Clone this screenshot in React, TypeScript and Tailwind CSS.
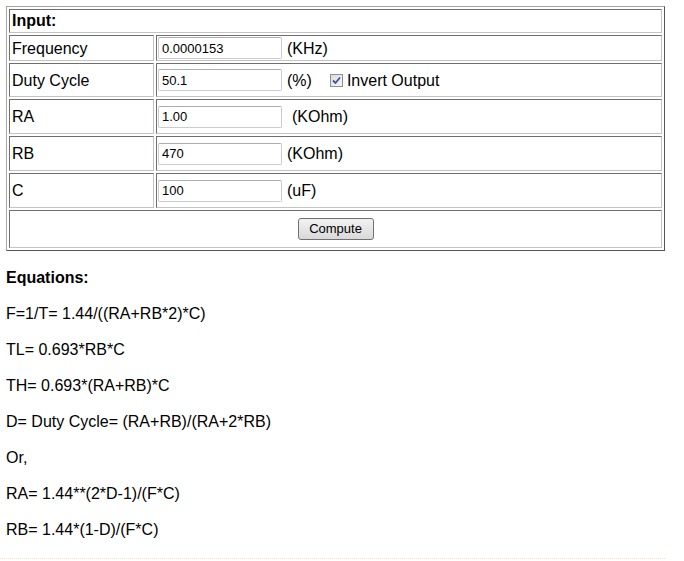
const cellBorder =
  'border border-t-[#6f6f6f] border-l-[#6f6f6f] border-r-[#c4c4c4] border-b-[#c4c4c4]';

function TextBox({ value }: { value: string }) {
  return (
    <div className="flex h-[22px] w-[124px] items-center rounded-[2px] border border-[#c9ccd1] border-t-[#abadb3] bg-white pl-[3px] pt-[1px] text-[13px] text-black">
      {value}
    </div>
  );
}

function CheckBox() {
  return (
    <span className="flex h-[13px] w-[13px] items-center justify-center border border-[#8f8f8f] bg-gradient-to-br from-[#dcdcdc] to-[#f6f6f6]">
      <svg width="9" height="9" viewBox="0 0 9 9">
        <path d="M1 4.5 L3.5 7 L8 1.5" fill="none" stroke="#3d5596" strokeWidth="1.8" />
      </svg>
    </span>
  );
}

function Row({
  label,
  value,
  unit,
  height,
  unitGap = 'ml-[5px]',
  extra,
}: {
  label: string;
  value: string;
  unit: string;
  height: string;
  unitGap?: string;
  extra?: React.ReactNode;
}) {
  return (
    <div className={`flex gap-[2px] ${height}`}>
      <div className={`${cellBorder} flex w-[145px] items-center pl-[2px] pt-[1px]`}>{label}</div>
      <div className={`${cellBorder} flex flex-1 items-center pl-[1px]`}>
        <TextBox value={value} />
        <span className={`${unitGap} pt-[1px]`}>{unit}</span>
        {extra}
      </div>
    </div>
  );
}

export default function App() {
  return (
    <div className="min-h-[561px] bg-white pl-[6px] pt-[6px] font-['Liberation_Sans',Arial,sans-serif] text-[16px] text-black">
      <div className="flex w-[659px] flex-col gap-[2px] border border-t-[#a3a3a3] border-l-[#a3a3a3] border-r-[#555555] border-b-[#555555] p-[2px]">
        <div className={`${cellBorder} flex h-[24px] items-center pl-[2px] font-bold`}>Input:</div>
        <Row label="Frequency" value="0.0000153" unit="(KHz)" height="h-[26px]" />
        <Row
          label="Duty Cycle"
          value="50.1"
          unit="(%)"
          height="h-[34px]"
          extra={
            <span className="ml-[18px] flex items-center gap-[4px] pt-[1px]">
              <CheckBox />
              <span>Invert Output</span>
            </span>
          }
        />
        <Row label="RA" value="1.00" unit="(KOhm)" height="h-[35px]" unitGap="ml-[10px]" />
        <Row label="RB" value="470" unit="(KOhm)" height="h-[35px]" />
        <Row label="C" value="100" unit="(uF)" height="h-[35px]" />
        <div className={`${cellBorder} flex h-[38px] items-center justify-center`}>
          <button className="h-[22px] w-[76px] rounded-[3px] border border-[#707070] bg-gradient-to-b from-[#f2f2f2] to-[#d9d9d9] text-[13px]">
            Compute
          </button>
        </div>
      </div>

      <div className="mt-[17px] flex flex-col gap-[16px] leading-[20px]">
        <p className="font-bold">Equations:</p>
        <p>F=1/T= 1.44/((RA+RB*2)*C)</p>
        <p>TL= 0.693*RB*C</p>
        <p>TH= 0.693*(RA+RB)*C</p>
        <p>D= Duty Cycle= (RA+RB)/(RA+2*RB)</p>
        <p>Or,</p>
        <p>RA= 1.44**(2*D-1)/(F*C)</p>
        <p>RB= 1.44*(1-D)/(F*C)</p>
      </div>

      <div className="ml-[-6px] mt-[18px] w-[665px] border-t border-dotted border-[#f7e0c0]" />
    </div>
  );
}
